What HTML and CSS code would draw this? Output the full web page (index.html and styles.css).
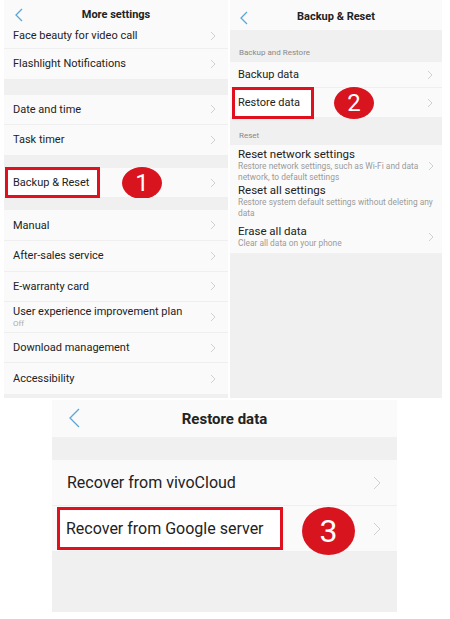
FILE: index.html
```html
<!DOCTYPE html>
<html lang="en">
<head>
    <meta charset="UTF-8">
    <meta name="viewport" content="width=device-width, initial-scale=1.0">
    <title>Restore data</title>
    <link rel="stylesheet" href="styles.css">
</head>
<body>
    <div class="ust">
        <!-- ekran 1 -->
        <div class="ekran sol">
            <div class="baslik"><svg class="geri" width="8" height="14" viewBox="0 0 8 14"><polyline points="7,1 1,7 7,13"/></svg><span>More settings</span></div>
            <div class="satir ilk"><span>Face beauty for video call</span><svg class="ok" width="6" height="10" viewBox="0 0 6 10"><polyline points="1,1 5,5 1,9"/></svg></div>
            <div class="satir"><span>Flashlight Notifications</span><svg class="ok" width="6" height="10" viewBox="0 0 6 10"><polyline points="1,1 5,5 1,9"/></svg></div>
            <div class="bosluk b15"></div>
            <div class="satir"><span>Date and time</span><svg class="ok" width="6" height="10" viewBox="0 0 6 10"><polyline points="1,1 5,5 1,9"/></svg></div>
            <div class="satir"><span>Task timer</span><svg class="ok" width="6" height="10" viewBox="0 0 6 10"><polyline points="1,1 5,5 1,9"/></svg></div>
            <div class="bosluk"></div>
            <div class="satir isaretli"><span class="kutu k1">Backup &amp; Reset</span><span class="rozet r1">1</span><svg class="ok" width="6" height="10" viewBox="0 0 6 10"><polyline points="1,1 5,5 1,9"/></svg></div>
            <div class="bosluk"></div>
            <div class="satir"><span>Manual</span><svg class="ok" width="6" height="10" viewBox="0 0 6 10"><polyline points="1,1 5,5 1,9"/></svg></div>
            <div class="satir"><span>After-sales service</span><svg class="ok" width="6" height="10" viewBox="0 0 6 10"><polyline points="1,1 5,5 1,9"/></svg></div>
            <div class="satir"><span>E-warranty card</span><svg class="ok" width="6" height="10" viewBox="0 0 6 10"><polyline points="1,1 5,5 1,9"/></svg></div>
            <div class="satir"><div class="iki"><span>User experience improvement plan</span><small>Off</small></div><svg class="ok" width="6" height="10" viewBox="0 0 6 10"><polyline points="1,1 5,5 1,9"/></svg></div>
            <div class="satir"><span>Download management</span><svg class="ok" width="6" height="10" viewBox="0 0 6 10"><polyline points="1,1 5,5 1,9"/></svg></div>
            <div class="satir son"><span>Accessibility</span><svg class="ok" width="6" height="10" viewBox="0 0 6 10"><polyline points="1,1 5,5 1,9"/></svg></div>
        </div>

        <!-- ekran 2 -->
        <div class="ekran sag">
            <div class="baslik b30"><svg class="geri" width="8" height="14" viewBox="0 0 8 14"><polyline points="7,1 1,7 7,13"/></svg><span>Backup &amp; Reset</span></div>
            <div class="grup g1">Backup and Restore</div>
            <div class="satir s26"><span>Backup data</span><svg class="ok" width="6" height="10" viewBox="0 0 6 10"><polyline points="1,1 5,5 1,9"/></svg></div>
            <div class="satir isaretli"><span class="kutu k2">Restore data</span><span class="rozet r2">2</span><svg class="ok" width="6" height="10" viewBox="0 0 6 10"><polyline points="1,1 5,5 1,9"/></svg></div>
            <div class="grup g2">Reset</div>
            <div class="uzunlar">
                <div class="satir uzun"><div class="iki"><span>Reset network settings</span><small>Restore network settings, such as Wi-Fi and data network, to default settings</small></div><svg class="ok" width="6" height="10" viewBox="0 0 6 10"><polyline points="1,1 5,5 1,9"/></svg></div>
                <div class="satir uzun oksuz"><div class="iki"><span>Reset all settings</span><small>Restore system default settings without deleting any data</small></div></div>
                <div class="satir uzun ek"><div class="iki"><span>Erase all data</span><small>Clear all data on your phone</small></div><svg class="ok" width="6" height="10" viewBox="0 0 6 10"><polyline points="1,1 5,5 1,9"/></svg></div>
            </div>
        </div>
    </div>

    <!-- ekran 3 -->
    <div class="ekran alt">
        <div class="baslik"><svg class="geri" width="11" height="20" viewBox="0 0 11 20"><polyline points="10,1 1,10 10,19"/></svg><span>Restore data</span></div>
        <div class="bosluk"></div>
        <div class="satir"><span>Recover from vivoCloud</span><svg class="ok" width="8" height="14" viewBox="0 0 8 14"><polyline points="1,1 7,7 1,13"/></svg></div>
        <div class="satir isaretli"><span class="kutu k3">Recover from Google server</span><span class="rozet r3">3</span><svg class="ok" width="8" height="14" viewBox="0 0 8 14"><polyline points="1,1 7,7 1,13"/></svg></div>
    </div>
</body>
</html>
```

FILE: styles.css
```css
body {
    margin: 0;
    background-color: white;
    font-family: Roboto, "Liberation Sans", sans-serif;
    color: #222;
}
.ust {
    display: flex;
    gap: 2px;
    height: 400px;
}
.ekran {
    background-color: #f0f0f0;
    display: flex;
    flex-direction: column;
}
.sol {
    margin-left: 4px;
    width: 224px;
    height: 398px;
}
.sag {
    width: 212px;
    height: 398px;
}
.alt {
    margin-left: 52px;
    width: 345px;
    height: 212px;
}
.baslik {
    background-color: #fafafa;
    height: 22px;
    display: flex;
    align-items: center;
    justify-content: center;
    position: relative;
    font-size: 11px;
    font-weight: bold;
}
.sol .baslik {
    height: 22px;
    padding-top: 7px;
    box-sizing: border-box;
}
.baslik.b30 {
    height: 30px;
    padding-top: 2px;
    box-sizing: border-box;
}
.geri {
    position: absolute;
    left: 11px;
    top: 8px;
    fill: none;
    stroke: #5aa6d6;
    stroke-width: 1.3;
}
.sag .geri {
    left: 10px;
    top: 11px;
}
.alt .baslik {
    height: 37px;
    font-size: 15px;
}
.alt .geri {
    left: 17px;
    top: 8px;
}
.satir {
    background-color: #fafafa;
    height: 30.6px;
    display: flex;
    align-items: center;
    padding: 0 12px 0 9px;
    font-size: 11px;
    border-bottom: 1px solid #efefef;
    box-sizing: border-box;
}
.satir.ilk {
    height: 27px;
    padding-top: 1px;
}
.satir.son {
    border-bottom: none;
}
.satir > span:first-child,
.iki {
    flex: 1;
}
.iki {
    display: flex;
    flex-direction: column;
}
.iki small {
    color: #aaa;
    font-size: 8px;
    margin-top: 1px;
}
.ok {
    fill: none;
    stroke: #d0d0d0;
    stroke-width: 1;
    flex-shrink: 0;
}
.bosluk {
    height: 12px;
    background-color: #f0f0f0;
}
.bosluk.b15 {
    height: 15px;
}
.alt .bosluk {
    height: 23px;
}
.alt .satir {
    height: 46px;
    font-size: 16px;
    padding: 0 16px 0 15px;
}
.grup {
    font-size: 8px;
    color: #888;
    padding-left: 9px;
    display: flex;
    align-items: flex-end;
    box-sizing: border-box;
}
.grup.g1 {
    height: 32px;
    padding-bottom: 5px;
}
.grup.g2 {
    height: 27px;
    padding-bottom: 5px;
}
.sag .satir {
    padding-left: 8px;
    padding-right: 9px;
}
.sag .satir.s26 {
    height: 26px;
}
.sag .satir.isaretli {
    height: 30px;
}
.uzunlar {
    background-color: #fafafa;
    padding: 2px 0 4px;
}
.satir.uzun {
    height: auto;
    padding-top: 1px;
    padding-right: 8px;
    border-bottom: none;
}
.satir.uzun.oksuz {
    padding-right: 3px;
}
.satir.uzun.ek {
    padding-top: 6px;
}
.satir.uzun span {
    font-size: 11.5px;
    line-height: 13px;
}
.sag .iki small {
    font-size: 8.4px;
    line-height: 11px;
    margin-top: 0;
    color: #9a9a9a;
}
.satir.uzun .ok {
    margin-left: -6px;
}
.satir.isaretli > span.kutu {
    flex: none;
}
.kutu {
    border: 3px solid #e0101e;
    background-color: white;
    display: flex;
    align-items: center;
    box-sizing: border-box;
}
.k1 {
    margin-left: -8px;
    width: 95px;
    height: 31px;
    padding-left: 5px;
}
.k2 {
    margin-left: -6px;
    width: 82px;
    height: 32px;
    padding-left: 3px;
}
.k3 {
    margin-left: -10px;
    width: 226px;
    height: 43px;
    padding-left: 6px;
}
.rozet {
    background-color: #d8141f;
    color: white;
    border-radius: 50%;
    display: flex;
    align-items: center;
    justify-content: center;
}
.r1 {
    width: 40px;
    height: 32px;
    margin-left: 22px;
    font-size: 24px;
}
.r2 {
    width: 40px;
    height: 32px;
    margin-left: 20px;
    font-size: 24px;
}
.r3 {
    width: 53px;
    height: 48px;
    margin-left: 19px;
    font-size: 32px;
    margin-top: 4px;
}
.rozet + .ok {
    margin-left: auto;
}
```
